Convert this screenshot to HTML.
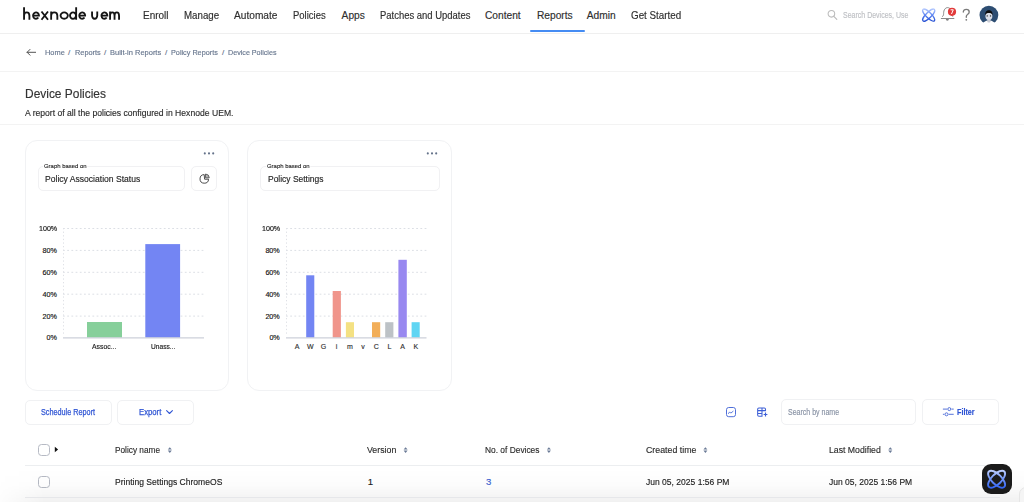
<!DOCTYPE html>
<html><head><meta charset="utf-8">
<style>
html,body{margin:0;padding:0;background:#fff;}
body{width:1024px;height:502px;overflow:hidden;position:relative;font-family:"Liberation Sans",sans-serif;}
.t{position:absolute;white-space:nowrap;line-height:1;transform-origin:0 0;-webkit-text-stroke:0.15px currentColor;}
.lbl{background:#fff;padding:0 1px;margin-left:-1px;}
.abs{position:absolute;box-sizing:border-box;}
.card{position:absolute;box-sizing:border-box;border:1px solid #f1f2f4;border-radius:12px;background:#fff;}
.sel{position:absolute;box-sizing:border-box;border:1px solid #f1f1f3;border-radius:5px;}
.btn{position:absolute;box-sizing:border-box;border:1px solid #f0f1f3;border-radius:5px;background:#fff;}
.hl{position:absolute;height:1px;background:#eceef1;}
.cb{position:absolute;box-sizing:border-box;width:12px;height:11.8px;border:1px solid #b6bac4;border-radius:3.5px;}
svg{position:absolute;overflow:visible;}
</style></head><body>
<!-- header -->
<!-- LOGO -->
<svg style="left:0;top:0" width="130" height="30" viewBox="0 0 130 30"><path d="M24.05 19.7 V7.3 M24.05 15.80 C24.05 13.03 25.25 12.43 26.73 12.43 C28.20 12.43 29.40 13.03 29.40 15.80 V19.7 M33.25 15.60 H38.95 A2.95 3.17 0 1 0 38.32 17.55 M41.5 11.5 L48.0 19.7 M48.0 11.5 L41.5 19.7 M51.15 19.7 V11.5 M51.15 15.80 C51.15 13.03 52.35 12.43 54.25 12.43 C56.15 12.43 57.35 13.03 57.35 15.80 V19.7 M64.20 12.43 A3.65 3.17 0 1 0 64.20 18.77 A3.65 3.17 0 1 0 64.20 12.43 Z M73.00 12.43 A3.0 3.17 0 1 0 73.00 18.77 A3.0 3.17 0 1 0 73.00 12.43 Z M76.15 7.3 V19.7 M79.45 15.60 H85.15 A2.95 3.17 0 1 0 84.52 17.55 M92.05 11.5 V15.60 C92.05 16.88 92.9 18.77 94.65 18.77 C96.4 18.77 97.25 16.88 97.25 15.60 V11.5 M101.65 15.60 H107.35 A2.95 3.17 0 1 0 106.72 17.55 M110.05 19.7 V11.5 M110.05 15.80 C110.05 13.03 111.25 12.43 112.30 12.43 C113.35 12.43 114.55 13.03 114.55 15.80 V19.7 M114.55 15.80 C114.55 13.03 115.75 12.43 116.80 12.43 C117.85 12.43 119.05 13.03 119.05 15.80 V19.7" fill="none" stroke="#151515" stroke-width="1.85"/></svg>
<div class="hl" style="left:0;top:33px;width:1024px;background:#efefef;"></div>
<div class="abs" style="left:529.5px;top:30.2px;width:55px;height:2.2px;border-radius:1.1px;background:#458cf3;"></div>

<!-- search icon -->
<svg style="left:826px;top:9px" width="14" height="14" viewBox="0 0 14 14"><circle cx="5.4" cy="4.8" r="3.3" fill="none" stroke="#bcbcbc" stroke-width="1.05"/><line x1="7.8" y1="7.3" x2="10.8" y2="10.4" stroke="#bcbcbc" stroke-width="1.15" stroke-linecap="round"/></svg>
<!-- atom icon header -->
<svg style="left:920px;top:7px" width="18" height="17" viewBox="0 0 18 17">
<defs><linearGradient id="hg" gradientUnits="userSpaceOnUse" x1="0" y1="1.5" x2="0" y2="14.8"><stop offset="0" stop-color="#b8ccff"/><stop offset="0.5" stop-color="#5c84f2"/><stop offset="1" stop-color="#1d48d0"/></linearGradient></defs>
<g fill="none" stroke="url(#hg)" stroke-width="1.25">
<path d="M14.43 13.88 A8.1 2.7 45 1 1 2.97 2.42 A8.1 2.7 45 1 1 14.43 13.88 Z"/>
<path d="M14.43 2.42 A8.1 2.7 -45 1 1 2.97 13.88 A8.1 2.7 -45 1 1 14.43 2.42 Z"/>
</g></svg>
<!-- bell -->
<svg style="left:939px;top:5px" width="20" height="18" viewBox="0 0 20 18">
<path d="M2.3 13.5 H14.9 M3.4 11.5 C4.3 11.1 4.6 10.3 4.6 8.6 C4.6 4.9 6.3 2.6 8.6 2.6 C10.9 2.6 12.6 4.9 12.6 8.6 C12.6 10.3 12.9 11.1 13.8 11.5" fill="none" stroke="#7d7d7d" stroke-width="0.9" stroke-linejoin="round" stroke-linecap="round"/>
<path d="M6.8 14.1 A1.55 1.55 0 0 0 9.9 14.1 Z" fill="#7d7d7d"/>
<circle cx="13" cy="6.8" r="4.1" fill="#e23b3b"/>
<path d="M11.6 4.8 H14.3 L12.5 9" fill="none" stroke="#fff" stroke-width="1" stroke-linejoin="round"/>
</svg>
<!-- help ? -->
<svg style="left:960px;top:5.5px" width="12" height="17" viewBox="0 0 12 17">
<path d="M3.3 6.1 C3.3 4.3 4.6 3.3 6.3 3.3 C8 3.3 9.2 4.4 9.2 5.9 C9.2 7.2 8.4 7.9 7.5 8.5 C6.7 9 6.3 9.5 6.3 10.6 V11.3" fill="none" stroke="#7a7a7a" stroke-width="1.35" stroke-linecap="round"/>
<circle cx="6.3" cy="13.8" r="0.9" fill="#7a7a7a"/>
</svg>
<!-- avatar -->
<svg style="left:978px;top:4.5px" width="22" height="22" viewBox="0 0 22 22">
<circle cx="10.9" cy="10.1" r="9.4" fill="#2d4d72"/>
<path d="M3.2 21 C4.5 17.6 7.2 15.6 10.9 15.6 C14.6 15.6 17.3 17.6 18.6 21 Z" fill="#fff"/>
<path d="M9.3 14 H12.5 V17 C11.6 17.8 10.2 17.8 9.3 17 Z" fill="#c9ccd4"/>
<ellipse cx="10.9" cy="10.9" rx="3.5" ry="3.9" fill="#dadde6"/>
<path d="M7.2 10.6 C6.9 6.9 8.6 5.3 10.9 5.3 C13.2 5.3 14.9 6.9 14.6 10.6 C14 8.6 12.6 8 10.9 8 C9.2 8 7.8 8.6 7.2 10.6 Z" fill="#0d0d0d"/>
<circle cx="9.2" cy="10.9" r="0.7" fill="#222"/><circle cx="12.5" cy="10.9" r="0.7" fill="#222"/>
</svg>
<!-- breadcrumb arrow -->
<svg style="left:25px;top:47px" width="13" height="11" viewBox="0 0 13 11"><path d="M10.6 5.3 H2.1 M5 2.4 L2.1 5.3 L5 8.2" fill="none" stroke="#4a4a4a" stroke-width="0.95" stroke-linecap="round" stroke-linejoin="round"/></svg>
<div class="hl" style="left:0;top:71px;width:1024px;background:#f3f3f3;"></div>
<div class="hl" style="left:0;top:124px;width:1024px;background:#f3f3f3;"></div>

<!-- card 1 -->
<div class="card" style="left:25px;top:140px;width:204px;height:251px;"></div>
<div class="sel" style="left:38px;top:166px;width:147px;height:25px;"></div>
<div class="sel" style="left:191px;top:166px;width:25.5px;height:25px;"></div>
<svg style="left:198px;top:172px" width="13" height="13" viewBox="0 0 13 13">
<path d="M6.2 2.6 A4.3 4.3 0 1 0 10.6 7.2 L6.6 7.2 Z" fill="none" stroke="#444" stroke-width="0.95" stroke-linejoin="round"/>
<path d="M7.5 2 A4 4 0 0 1 11.3 5.8 L7.5 5.8 Z" fill="#b5b5b5" stroke="#4a4a4a" stroke-width="0.8" stroke-linejoin="round"/>
</svg>
<svg style="left:203px;top:151px" width="13" height="5" viewBox="0 0 13 5"><g fill="#64728a"><circle cx="1.8" cy="2.4" r="1.05"/><circle cx="6" cy="2.4" r="1.05"/><circle cx="10.2" cy="2.4" r="1.05"/></g></svg>

<!-- card 2 -->
<div class="card" style="left:247px;top:140px;width:205px;height:251px;"></div>
<div class="sel" style="left:260px;top:166px;width:179.5px;height:25px;"></div>
<svg style="left:425.5px;top:151px" width="13" height="5" viewBox="0 0 13 5"><g fill="#64728a"><circle cx="1.8" cy="2.4" r="1.05"/><circle cx="6" cy="2.4" r="1.05"/><circle cx="10.2" cy="2.4" r="1.05"/></g></svg>

<!-- chart 1 -->
<svg style="left:0;top:0" width="1024" height="502">
<g stroke="#dcdfe5" stroke-width="1" stroke-dasharray="1.8 2.4" fill="none">
<path d="M63 228.5 H204 M63 250.4 H204 M63 272.3 H204 M63 294.2 H204 M63 316.1 H204"/>
<path d="M286 228.5 H426.5 M286 250.4 H426.5 M286 272.3 H426.5 M286 294.2 H426.5 M286 316.1 H426.5"/>
</g>
<g stroke="#dfe1e6" stroke-width="1" stroke-dasharray="1.3 2.3" fill="none">
<path d="M63.5 228 V336"/>
<path d="M286.5 228 V336"/>
</g>
<rect x="87" y="322" width="35" height="15.7" fill="#86cf9a"/>
<rect x="145.3" y="244.1" width="34.8" height="93.6" fill="#7385f3"/>
<line x1="63" y1="337.9" x2="204" y2="337.9" stroke="#cdd0da" stroke-width="1.1"/>

<rect x="306.2" y="275.3" width="8.1" height="62.4" fill="#7385f3"/>
<rect x="332.7" y="291" width="8.2" height="46.7" fill="#f0958b"/>
<rect x="345.9" y="322.2" width="8.1" height="15.5" fill="#f4e183"/>
<rect x="372" y="322.2" width="8.2" height="15.5" fill="#f2ae59"/>
<rect x="385.2" y="322.2" width="8.2" height="15.5" fill="#bdc2c6"/>
<rect x="398.4" y="259.8" width="8.4" height="77.9" fill="#9888f0"/>
<rect x="411.6" y="322.2" width="8.1" height="15.5" fill="#5fd5f3"/>
<line x1="286" y1="337.9" x2="426.5" y2="337.9" stroke="#cdd0da" stroke-width="1.1"/>
</svg>

<!-- toolbar -->
<div class="btn" style="left:25px;top:399.5px;width:87px;height:25.3px;"></div>
<div class="btn" style="left:117.3px;top:399.5px;width:76.5px;height:25.3px;"></div>
<svg style="left:165px;top:408px" width="9" height="7" viewBox="0 0 9 7"><path d="M1.6 2.6 L4.5 5.5 L7.4 2.6" fill="none" stroke="#2f55d4" stroke-width="1.1" stroke-linecap="round" stroke-linejoin="round"/></svg>

<svg style="left:724px;top:405px" width="14" height="14" viewBox="0 0 14 14">
<rect x="2.5" y="2.5" width="9" height="9.2" rx="2.2" fill="none" stroke="#4f6fd9" stroke-width="1"/>
<path d="M4.5 8.5 L5.6 6.9 L6.8 8.1 L9.1 6.3" fill="none" stroke="#4f6fd9" stroke-width="0.9" stroke-linejoin="round" stroke-linecap="round"/>
</svg>
<svg style="left:755px;top:405px" width="16" height="14" viewBox="0 0 16 14">
<path d="M3.9 3 H9.3 C10 3 10.5 3.5 10.5 4.2 V5.6 H2.65 M2.65 4.2 C2.65 3.5 3.2 3 3.9 3 M2.65 4.2 V10 C2.65 10.7 3.2 11.25 3.9 11.25 H7 V3 M2.65 8.4 H7" fill="none" stroke="#3d5fd6" stroke-width="1.05"/>
<path d="M8.6 9.5 H12.4 M10.5 7.6 V11.4" stroke="#3d5fd6" stroke-width="1.15"/>
</svg>
<div class="btn" style="left:781px;top:399.3px;width:135px;height:25.4px;"></div>
<div class="btn" style="left:922.3px;top:399.3px;width:76.6px;height:25.4px;"></div>
<svg style="left:941px;top:404px" width="15" height="14" viewBox="0 0 15 14">
<g fill="none" stroke="#4d6bd7" stroke-width="0.95">
<path d="M1.9 5.1 H6.1 M10.5 5.1 H12.7"/>
<circle cx="8.3" cy="5.1" r="1.5"/>
<path d="M1.9 10.3 H3.3 M7.7 10.3 H12.7"/>
<circle cx="5.5" cy="10.3" r="1.5"/>
</g></svg>

<!-- table -->
<div class="cb" style="left:38px;top:444.2px;"></div>
<svg style="left:53px;top:445px" width="7" height="9" viewBox="0 0 7 9"><path d="M1.8 1.8 L5.1 4.5 L1.8 7.2 Z" fill="#111"/></svg>
<div class="hl" style="left:25px;top:465px;width:975px;background:#eceef0;"></div>
<div class="cb" style="left:38px;top:476.2px;"></div>
<svg style="left:0;top:0" width="1024" height="502">
<g fill="#6a7a96">
<path d="M167.8 449.6 L169.8 447.2 L171.8 449.6 Z M167.8 450.5 L169.8 452.9 L171.8 450.5 Z"/>
<path d="M403.6 449.6 L405.6 447.2 L407.6 449.6 Z M403.6 450.5 L405.6 452.9 L407.6 450.5 Z"/>
<path d="M546.9 449.6 L548.9 447.2 L550.9 449.6 Z M546.9 450.5 L548.9 452.9 L550.9 450.5 Z"/>
<path d="M703.4 449.6 L705.4 447.2 L707.4 449.6 Z M703.4 450.5 L705.4 452.9 L707.4 450.5 Z"/>
<path d="M888.3 449.6 L890.3 447.2 L892.3 449.6 Z M888.3 450.5 L890.3 452.9 L892.3 450.5 Z"/>
</g></svg>
<!-- bottom shadow -->
<div class="abs" style="left:0;top:468px;width:1024px;height:34px;background:linear-gradient(to bottom,rgba(0,0,0,0) 0%,rgba(0,0,0,0.01) 50%,rgba(0,0,0,0.055) 100%);-webkit-mask-image:linear-gradient(to right,rgba(0,0,0,0.15) 0px,#000 45px);"></div>
<div class="hl" style="left:25px;top:497px;width:975px;background:#e6e7ea;"></div>

<div class="t " style="left:142.70px;top:11.47px;font-size:10.2px;color:#2e2e2e;transform:scaleX(0.9778);">Enroll</div>
<div class="t " style="left:183.70px;top:11.47px;font-size:10.2px;color:#2e2e2e;transform:scaleX(0.9549);">Manage</div>
<div class="t " style="left:234.00px;top:11.47px;font-size:10.2px;color:#2e2e2e;transform:scaleX(0.9964);">Automate</div>
<div class="t " style="left:293.30px;top:11.47px;font-size:10.2px;color:#2e2e2e;transform:scaleX(0.9304);">Policies</div>
<div class="t " style="left:341.60px;top:11.47px;font-size:10.2px;color:#2e2e2e;">Apps</div>
<div class="t " style="left:379.50px;top:11.47px;font-size:10.2px;color:#2e2e2e;transform:scaleX(0.9279);">Patches and Updates</div>
<div class="t " style="left:485.00px;top:11.47px;font-size:10.2px;color:#2e2e2e;">Content</div>
<div class="t " style="left:537.00px;top:11.47px;font-size:10.2px;color:#2e2e2e;">Reports</div>
<div class="t " style="left:586.70px;top:11.47px;font-size:10.2px;color:#2e2e2e;">Admin</div>
<div class="t " style="left:630.70px;top:11.47px;font-size:10.2px;color:#2e2e2e;transform:scaleX(0.9643);">Get Started</div>
<div class="t " style="left:843.40px;top:12.26px;font-size:8.2px;color:#bdbfc3;transform:scaleX(0.8555);">Search Devices, Use</div>
<div class="t " style="left:45.20px;top:49.23px;font-size:8px;color:#66758d;transform:scaleX(0.9278);">Home</div>
<div class="t " style="left:74.50px;top:49.23px;font-size:8px;color:#66758d;transform:scaleX(0.9175);">Reports</div>
<div class="t " style="left:109.80px;top:49.23px;font-size:8px;color:#66758d;transform:scaleX(0.9362);">Built-in Reports</div>
<div class="t " style="left:170.90px;top:49.23px;font-size:8px;color:#66758d;transform:scaleX(0.9074);">Policy Reports</div>
<div class="t " style="left:227.60px;top:49.23px;font-size:8px;color:#66758d;transform:scaleX(0.8941);">Device Policies</div>
<div class="t " style="left:68.10px;top:49.23px;font-size:8px;color:#66758d;">/</div>
<div class="t " style="left:104.00px;top:49.23px;font-size:8px;color:#66758d;">/</div>
<div class="t " style="left:165.00px;top:49.23px;font-size:8px;color:#66758d;">/</div>
<div class="t " style="left:222.00px;top:49.23px;font-size:8px;color:#66758d;">/</div>
<div class="t " style="left:25.40px;top:87.76px;font-size:12.8px;color:#333;transform:scaleX(0.9333);">Device Policies</div>
<div class="t " style="left:25.40px;top:108.04px;font-size:9.4px;color:#2b2b2b;transform:scaleX(0.9174);">A report of all the policies configured in Hexnode UEM.</div>
<div class="t lbl" style="left:44.10px;top:162.65px;font-size:6.2px;color:#1e1e1e;transform:scaleX(0.9625);-webkit-text-stroke:0.12px #1e1e1e;">Graph based on</div>
<div class="t " style="left:44.50px;top:174.88px;font-size:9px;color:#262626;transform:scaleX(0.9525);">Policy Association Status</div>
<div class="t lbl" style="left:267.00px;top:162.65px;font-size:6.2px;color:#1e1e1e;transform:scaleX(0.9625);-webkit-text-stroke:0.12px #1e1e1e;">Graph based on</div>
<div class="t " style="left:267.50px;top:174.88px;font-size:9px;color:#262626;transform:scaleX(0.9402);">Policy Settings</div>
<div class="t " style="left:38.70px;top:224.91px;font-size:7.2px;color:#111;transform:scaleX(0.9883);">100%</div>
<div class="t " style="left:42.49px;top:246.81px;font-size:7.2px;color:#111;">80%</div>
<div class="t " style="left:42.49px;top:268.71px;font-size:7.2px;color:#111;">60%</div>
<div class="t " style="left:42.49px;top:290.61px;font-size:7.2px;color:#111;">40%</div>
<div class="t " style="left:42.49px;top:312.51px;font-size:7.2px;color:#111;">20%</div>
<div class="t " style="left:46.49px;top:334.21px;font-size:7.2px;color:#111;">0%</div>
<div class="t " style="left:261.60px;top:224.91px;font-size:7.2px;color:#111;transform:scaleX(0.9883);">100%</div>
<div class="t " style="left:265.39px;top:246.81px;font-size:7.2px;color:#111;">80%</div>
<div class="t " style="left:265.39px;top:268.71px;font-size:7.2px;color:#111;">60%</div>
<div class="t " style="left:265.39px;top:290.61px;font-size:7.2px;color:#111;">40%</div>
<div class="t " style="left:265.39px;top:312.51px;font-size:7.2px;color:#111;">20%</div>
<div class="t " style="left:269.39px;top:334.21px;font-size:7.2px;color:#111;">0%</div>
<div class="t " style="left:92.20px;top:343.74px;font-size:6.8px;color:#222;transform:scaleX(1.0089);">Assoc...</div>
<div class="t " style="left:150.85px;top:343.74px;font-size:6.8px;color:#222;transform:scaleX(0.9743);">Unass...</div>
<div class="t " style="left:294.72px;top:343.37px;font-size:7px;color:#333;">A</div>
<div class="t " style="left:306.95px;top:343.37px;font-size:7px;color:#333;">W</div>
<div class="t " style="left:320.73px;top:343.37px;font-size:7px;color:#333;">G</div>
<div class="t " style="left:335.87px;top:343.37px;font-size:7px;color:#333;">i</div>
<div class="t " style="left:346.93px;top:343.37px;font-size:7px;color:#333;">m</div>
<div class="t " style="left:361.30px;top:343.37px;font-size:7px;color:#333;">v</div>
<div class="t " style="left:373.72px;top:343.37px;font-size:7px;color:#333;">C</div>
<div class="t " style="left:387.50px;top:343.37px;font-size:7px;color:#333;">L</div>
<div class="t " style="left:400.32px;top:343.37px;font-size:7px;color:#333;">A</div>
<div class="t " style="left:413.52px;top:343.37px;font-size:7px;color:#333;">K</div>
<div class="t " style="left:41.00px;top:407.55px;font-size:8.8px;color:#2f55d4;transform:scaleX(0.8253);-webkit-text-stroke:0.25px #2f55d4;">Schedule Report</div>
<div class="t " style="left:138.70px;top:407.55px;font-size:8.8px;color:#2f55d4;transform:scaleX(0.8768);-webkit-text-stroke:0.25px #2f55d4;">Export</div>
<div class="t " style="left:787.60px;top:407.72px;font-size:8.6px;color:#8791a3;transform:scaleX(0.8160);">Search by name</div>
<div class="t " style="left:957.00px;top:407.55px;font-size:8.8px;color:#2f55d4;font-weight:bold;transform:scaleX(0.8181);">Filter</div>
<div class="t " style="left:114.90px;top:444.97px;font-size:9.6px;color:#2b2b2b;transform:scaleX(0.8606);">Policy name</div>
<div class="t " style="left:367.20px;top:444.97px;font-size:9.6px;color:#2b2b2b;transform:scaleX(0.9150);">Version</div>
<div class="t " style="left:485.00px;top:444.97px;font-size:9.6px;color:#2b2b2b;transform:scaleX(0.8731);">No. of Devices</div>
<div class="t " style="left:645.50px;top:444.97px;font-size:9.6px;color:#2b2b2b;transform:scaleX(0.9171);">Created time</div>
<div class="t " style="left:828.70px;top:444.97px;font-size:9.6px;color:#2b2b2b;transform:scaleX(0.9072);">Last Modified</div>
<div class="t " style="left:114.90px;top:477.47px;font-size:9.6px;color:#222;transform:scaleX(0.8906);">Printing Settings ChromeOS</div>
<div class="t " style="left:367.80px;top:477.47px;font-size:9.6px;color:#222;">1</div>
<div class="t " style="left:486.00px;top:477.47px;font-size:9.6px;color:#3a5fcf;">3</div>
<div class="t " style="left:645.50px;top:477.47px;font-size:9.6px;color:#222;transform:scaleX(0.8889);">Jun 05, 2025 1:56 PM</div>
<div class="t " style="left:828.70px;top:477.47px;font-size:9.6px;color:#222;transform:scaleX(0.8857);">Jun 05, 2025 1:56 PM</div>

<div class="abs" style="left:1019px;top:487px;width:24px;height:30px;border-radius:7px;border:1px solid #e6e6e6;background:#f5f5f5;"></div>
<!-- floating atom button -->
<div class="abs" style="left:982px;top:464px;width:29.5px;height:29.5px;border-radius:9px;background:#1b1b1b;"></div>
<svg style="left:982px;top:464px" width="30" height="30" viewBox="0 0 30 30">
<defs><linearGradient id="ag" gradientUnits="userSpaceOnUse" x1="0" y1="5.5" x2="0" y2="25"><stop offset="0" stop-color="#c6d5ff"/><stop offset="0.5" stop-color="#6f93f7"/><stop offset="1" stop-color="#2b5ef3"/></linearGradient></defs>
<g fill="none" stroke="url(#ag)" stroke-width="1.9">
<path d="M22.31 22.91 A10.9 5.0 45 1 1 6.89 7.49 A10.9 5.0 45 1 1 22.31 22.91 Z"/>
<path d="M22.31 7.49 A10.9 5.0 -45 1 1 6.89 22.91 A10.9 5.0 -45 1 1 22.31 7.49 Z"/>
</g></svg>
</body></html>
